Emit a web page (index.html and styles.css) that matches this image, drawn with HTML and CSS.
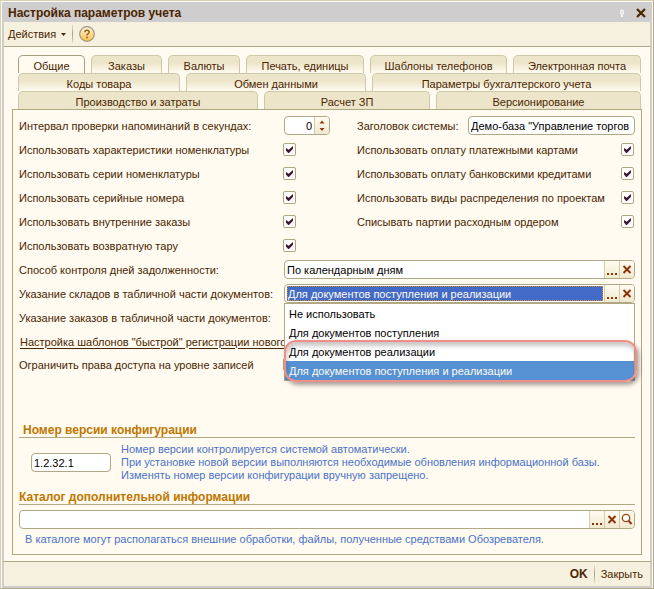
FILE: index.html
```html
<!DOCTYPE html>
<html lang="ru">
<head>
<meta charset="utf-8">
<title>Настройка параметров учета</title>
<link rel="stylesheet" href="styles.css">
</head>
<body>
<main class="window">
  <header class="titlebar">
    <h1>Настройка параметров учета</h1>
    <svg class="pin" viewBox="0 0 6 8" aria-hidden="true"><path d="M1 1.5Q3-.5 5 1.5V5H4V8H2V5H1Z" fill="#f6f4f4"/><path d="M3 1.5v3" stroke="#cfcdcd"/></svg>
    <button class="close" type="button" aria-label="Закрыть окно"><svg viewBox="0 0 10 10"><path d="M1 1 9 9M9 1 1 9" stroke="#4a2500" stroke-width="2.2"/></svg></button>
  </header>
  <nav class="toolbar">
    <button class="actions" type="button">Действия <svg viewBox="0 0 5 3"><path d="M0 0H5L2.5 3Z" fill="#4a2500"/></svg></button>
    <span class="divider"></span>
    <button class="help" type="button" aria-label="Справка"><svg viewBox="0 0 16 16"><defs><linearGradient id="gold" x2="0" y2="1"><stop stop-color="#fff6da"/><stop offset="1" stop-color="#fbc04b"/></linearGradient></defs><circle cx="8" cy="8" r="7.3" fill="url(#gold)" stroke="#a09484" stroke-width="1.2"/><path d="M5.8 6.2Q5.9 4.2 8 4.2T10.2 6.1Q10.2 7.2 8.9 7.9 8 8.4 8 9.6" fill="none" stroke="#9a5a20" stroke-width="1.4"/><path d="M7.2 10.7h1.6v1.5H7.2z" fill="#9a5a20"/></svg></button>
  </nav>
  <div class="content">
    <div class="tabs" role="tablist">
      <div class="tabrow row1"><button class="tab active" role="tab">Общие</button><button class="tab" role="tab">Заказы</button><button class="tab" role="tab">Валюты</button><button class="tab" role="tab">Печать, единицы</button><button class="tab" role="tab">Шаблоны телефонов</button><button class="tab" role="tab">Электронная почта</button></div>
      <div class="tabrow row2"><button class="tab" role="tab">Коды товара</button><button class="tab" role="tab">Обмен данными</button><button class="tab" role="tab">Параметры бухгалтерского учета</button></div>
      <div class="tabrow row3"><button class="tab" role="tab">Производство и затраты</button><button class="tab" role="tab">Расчет ЗП</button><button class="tab" role="tab">Версионирование</button></div>
    </div>
    <form class="panel">
      <div class="options">
        <div class="column left">
          <div class="line"><label for="interval">Интервал проверки напоминаний в секундах:</label><span class="field spin"><input id="interval" type="text" value="0"><button type="button" aria-label="Изменить значение"><svg viewBox="0 0 14 17"><path d="M4.5 6.5H9.5L7 3.5ZM4.5 11H9.5L7 14Z" fill="#8c3a10"/></svg></button></span></div>
          <div class="line"><label for="c1">Использовать характеристики номенклатуры</label><input id="c1" type="checkbox" checked></div>
          <div class="line"><label for="c2">Использовать серии номенклатуры</label><input id="c2" type="checkbox" checked></div>
          <div class="line"><label for="c3">Использовать серийные номера</label><input id="c3" type="checkbox" checked></div>
          <div class="line"><label for="c4">Использовать внутренние заказы</label><input id="c4" type="checkbox" checked></div>
          <div class="line"><label for="c5">Использовать возвратную тару</label><input id="c5" type="checkbox" checked></div>
        </div>
        <div class="column right">
          <div class="line"><label for="heading">Заголовок системы:</label><span class="field heading"><input id="heading" type="text" value='Демо-база "Управление торгов'></span></div>
          <div class="line"><label for="c6">Использовать оплату платежными картами</label><input id="c6" type="checkbox" checked></div>
          <div class="line"><label for="c7">Использовать оплату банковскими кредитами</label><input id="c7" type="checkbox" checked></div>
          <div class="line"><label for="c8">Использовать виды распределения по проектам</label><input id="c8" type="checkbox" checked></div>
          <div class="line"><label for="c9">Списывать партии расходным ордером</label><input id="c9" type="checkbox" checked></div>
        </div>
      </div>
      <div class="line"><label for="debt">Способ контроля дней задолженности:</label><span class="field"><input id="debt" type="text" value="По календарным дням"><button type="button" aria-label="Выбрать"><svg viewBox="0 0 14 17"><path d="M2 12h2v2H2zM6 12h2v2H6zM10 12h2v2h-2z" fill="#8c3508"/></svg></button><button type="button" aria-label="Очистить"><svg viewBox="0 0 14 17"><path d="M3.5 5 10.5 12M10.5 5 3.5 12" stroke="#8c3508" stroke-width="2"/></svg></button></span></div>
      <div class="line"><label for="stock">Указание складов в табличной части документов:</label>
        <div class="combo">
          <span class="field"><input id="stock" class="selected" type="text" value="Для документов поступления и реализации"><button type="button" aria-label="Выбрать"><svg viewBox="0 0 14 17"><path d="M2 12h2v2H2zM6 12h2v2H6zM10 12h2v2h-2z" fill="#8c3508"/></svg></button><button type="button" aria-label="Очистить"><svg viewBox="0 0 14 17"><path d="M3.5 5 10.5 12M10.5 5 3.5 12" stroke="#8c3508" stroke-width="2"/></svg></button></span>
          <div class="dropdown">
            <ul role="listbox" aria-label="Указание складов">
              <li role="option">Не использовать</li>
              <li role="option">Для документов поступления</li>
              <li role="option">Для документов реализации</li>
              <li role="option" class="current" aria-selected="true">Для документов поступления и реализации</li>
            </ul>
            <div class="marker"></div>
          </div>
        </div>
      </div>
      <div class="line"><label for="orders">Указание заказов в табличной части документов:</label><span class="field"><input id="orders" type="text"></span></div>
      <div class="line link"><a href="#templates">Настройка шаблонов "быстрой" регистрации нового</a></div>
      <div class="line access"><label for="c10">Ограничить права доступа на уровне записей</label><input id="c10" type="checkbox"></div>
      <section class="version">
        <h2>Номер версии конфигурации</h2>
        <div class="version-body">
          <span class="field"><input type="text" value="1.2.32.1" aria-label="Номер версии"></span>
          <p>Номер версии контролируется системой автоматически.<br>При установке новой версии выполняются необходимые обновления информационной базы.<br>Изменять номер версии конфигурации вручную запрещено.</p>
        </div>
      </section>
      <section class="catalog">
        <h2>Каталог дополнительной информации</h2>
        <span class="field"><input type="text" aria-label="Каталог"><button type="button" aria-label="Выбрать"><svg viewBox="0 0 14 17"><path d="M2 12h2v2H2zM6 12h2v2H6zM10 12h2v2h-2z" fill="#8c3508"/></svg></button><button type="button" aria-label="Очистить"><svg viewBox="0 0 14 17"><path d="M3.5 5 10.5 12M10.5 5 3.5 12" stroke="#8c3508" stroke-width="2"/></svg></button><button type="button" aria-label="Открыть"><svg viewBox="0 0 14 17"><circle cx="6" cy="7" r="3.7" fill="#fffbf0" stroke="#8c4a18" stroke-width="1.3"/><path d="M8.5 9.7 11.5 13" stroke="#8c3508" stroke-width="2"/></svg></button></span>
        <p>В каталоге могут располагаться внешние обработки, файлы, полученные средствами Обозревателя.</p>
      </section>
    </form>
  </div>
  <footer class="footer"><button class="ok" type="button">OK</button><span class="divider"></span><button type="button">Закрыть</button></footer>
</main>
</body>
</html>
```

FILE: styles.css
```css
* { box-sizing: border-box; }

body {
  margin: 0;
  background: #fffbf0;
  color: #4a2500;
  font: 11px/14px "Liberation Sans", Arial, sans-serif;
}

h1, h2, p, ul { margin: 0; padding: 0; }
h1, h2 { font-size: 12px; line-height: 14px; font-weight: bold; }
ul { list-style: none; }

button, input {
  margin: 0;
  padding: 0;
  border: 0;
  background: none;
  color: inherit;
  font: inherit;
}

button svg { display: block; }

.window {
  display: flex;
  flex-direction: column;
  min-height: 100vh;
  border: 1px solid #b0a784;
  border-top-color: #d8d0b4;
  border-left-color: #d8d0b4;
  padding: 1px 1px 0;
}

.titlebar {
  display: flex;
  align-items: center;
  height: 20px;
  padding: 2px 6px 0;
  background: #cfcdce;
}

.titlebar h1 { flex: 1; }
.pin { width: 6px; height: 8px; margin-right: 11px; }
.close svg { width: 10px; height: 10px; }

.toolbar {
  display: flex;
  align-items: center;
  gap: 6px;
  height: 25px;
  padding: 0 4px 1px;
  background: #f6f1de;
  border: solid #cfcdce;
  border-width: 0 2px;
  box-shadow: inset 0 -1px #b0a784;
}

.actions { display: flex; align-items: center; gap: 5px; }
.actions svg { width: 5px; height: 3px; }
.help svg { width: 16px; height: 16px; }
.divider { width: 1px; height: 18px; background: linear-gradient(#e4dcc0, #a89f80, #e4dcc0); }

.content {
  flex: 1;
  display: flex;
  flex-direction: column;
  padding: 8px 8px 6px;
  border: solid #cfcdce;
  border-width: 0 2px;
}

.tabs { padding: 0 1px 0 6px; }
.tabrow { display: grid; gap: 6px; }
.row1 { grid-template-columns: 67fr 71fr 72fr 118fr 137fr 128fr; }
.row2 { grid-template-columns: 162fr 180fr 269fr; }
.row3 { grid-template-columns: 240fr 166fr 205fr; }

.tab {
  min-width: 0;
  height: 18px;
  padding-top: 2px;
  border: 1px solid #cfc8a8;
  border-bottom: 0;
  border-radius: 5px 5px 0 0;
  background: linear-gradient(#ede5ca 40%, #fffbf0);
  white-space: nowrap;
}

.row3 .tab { background: #ede5ca; }

.tab.active {
  border-color: #a89f80;
  background: #fffbf0;
}

.panel {
  flex: 1;
  padding: 4px 6px 6px;
  border: 1px solid #b0a784;
}

.options { display: grid; grid-template-columns: minmax(0, 338fr) minmax(0, 278fr); }

.line {
  display: flex;
  align-items: center;
  height: 24px;
  padding-bottom: 1px;
}

.line label { width: 264px; white-space: nowrap; }
.right label { flex: 1; width: auto; }

input[type="checkbox"] {
  appearance: none;
  display: grid;
  place-items: center;
  width: 13px;
  height: 13px;
  border: 1px solid #b0a784;
  border-radius: 2px;
  background: #fff;
}

input[type="checkbox"]:checked::before {
  content: "";
  width: 7px;
  height: 7px;
  background: #3c1830;
  clip-path: polygon(0 30%, 38% 55%, 100% 0, 100% 38%, 42% 100%, 30% 100%, 0 65%);
}

.right input[type="checkbox"] { margin-right: 1px; }

.field {
  display: flex;
  flex: 1;
  height: 19px;
  border: 1px solid #b0a784;
  border-radius: 4px;
  overflow: hidden;
  background: #fff;
}

.line .field { margin-left: 1px; }

.field input {
  flex: 1;
  min-width: 0;
  padding: 0 2px;
  color: #000;
  outline: 0;
}

.field button {
  width: 15px;
  border-left: 1px solid #d3cbae;
  background: linear-gradient(#fffbf0, #f0e9d0);
}

.field button svg { width: 14px; height: 17px; }
.line .spin { flex: none; width: 46px; }
.spin input { text-align: right; }
.line .heading { flex: none; width: 167px; margin: 0; }

.field .selected {
  margin: 1px 1px 1px 2px;
  padding: 0;
  border: 1px dotted #d08a30;
  background: #426ac6;
  color: #fffbf0;
}

.combo { position: relative; display: flex; flex: 1; }

.dropdown {
  position: absolute;
  z-index: 1;
  top: 100%;
  left: 1px;
  right: 0;
}

.dropdown ul {
  border: 1px solid #b0a784;
  background: #fff;
  color: #000;
}

.dropdown li {
  height: 19px;
  padding: 3px 4px 2px;
}

.dropdown .current { background: #5591d3; color: #fffbf0; }

.marker {
  position: absolute;
  top: 37px;
  bottom: -1px;
  left: 0;
  right: -2px;
  border: 2px solid #ee8f88;
  border-radius: 12px;
  box-shadow: 2px 3px 4px rgba(80, 65, 70, .5), inset 1px 4px 4px rgba(80, 65, 70, .3);
}

.link { padding-left: 1px; }
.link a { color: inherit; text-underline-offset: 2px; white-space: nowrap; }
.access { height: 22px; }

h2 {
  border-bottom: 1px solid #b0a784;
  color: #c07600;
}

.version { margin-top: 47px; }
.version h2 { padding-left: 4px; }

.version-body {
  display: flex;
  align-items: center;
  gap: 10px;
  padding: 5px 0 8px 12px;
}

.version-body .field { flex: none; width: 80px; }
.version-body p, .catalog p { color: #4a72c8; line-height: 13px; }
.catalog .field { margin-top: 5px; }
.catalog p { padding: 4px 6px 0; }

.footer {
  display: flex;
  align-items: center;
  justify-content: flex-end;
  gap: 6px;
  height: 27px;
  padding: 0 7px;
  background: #f6f1de;
  border: 2px solid #cfcdce;
  border-top: 1px solid #b0a784;
}

.ok { font-size: 12px; font-weight: bold; }
```
